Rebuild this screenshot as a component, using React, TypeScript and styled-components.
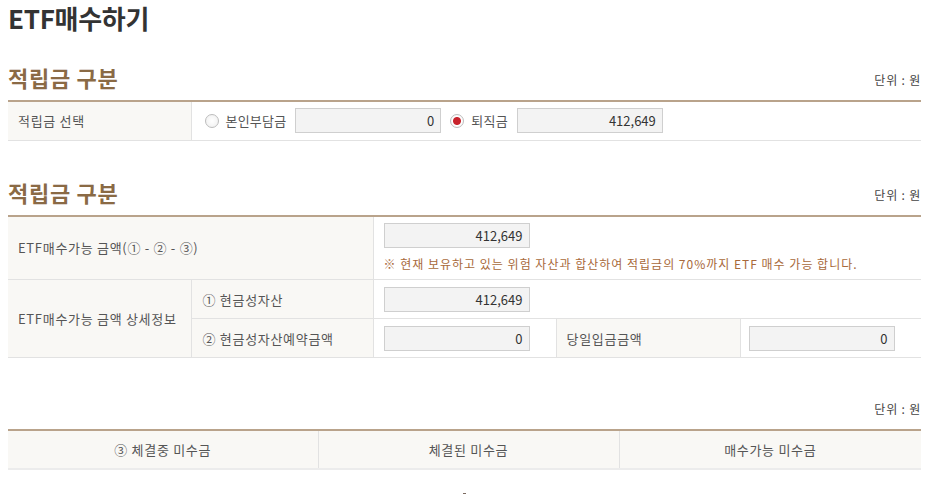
import styled, { createGlobalStyle } from 'styled-components'

const GlobalStyle = createGlobalStyle`
  html, body {
    margin: 0;
    padding: 0;
    background: #fff;
  }
  body {
    font-family: "Noto Sans CJK KR", "Noto Sans", sans-serif;
    color: #555;
    font-size: 13px;
  }
`

const Colors = {
  Brown: '#8a6a45',
  BrownLine: '#b9a38b',
  Line: '#e2e2e2',
  LabelBg: '#f9f8f5',
  InputBg: '#f3f3f3',
  InputLine: '#cfcfcf',
  Notice: '#a8693a',
}

const sections = [
  { title: '적립금 구분' },
  { title: '적립금 구분' },
]

function Amount({ value, width = 146 }: { value: string; width?: number }) {
  return <AmountBox $width={width}>{value}</AmountBox>
}

function Radio({ checked, label }: { checked?: boolean; label: string }) {
  return (
    <RadioLabel>
      <RadioCircle $checked={checked} />
      {label}
    </RadioLabel>
  )
}

function App() {
  return (
    <Page>
      <GlobalStyle />
      <PageTitle>ETF매수하기</PageTitle>

      <SectionHead $top={28}>
        <SectionTitle>{sections[0].title}</SectionTitle>
        <Unit>단위 : 원</Unit>
      </SectionHead>
      <Table>
        <colgroup>
          <col style={{ width: 183 }} />
          <col />
        </colgroup>
        <tbody>
          <Row $h={39}>
            <LabelCell $pad={10}>적립금 선택</LabelCell>
            <ValueCell $pad={13}>
              <RadioGroup>
                <Radio label="본인부담금" />
                <Amount value="0" />
                <Radio checked label="퇴직금" />
                <Amount value="412,649" />
              </RadioGroup>
            </ValueCell>
          </Row>
        </tbody>
      </Table>

      <SectionHead $top={36}>
        <SectionTitle>{sections[1].title}</SectionTitle>
        <Unit>단위 : 원</Unit>
      </SectionHead>
      <Table>
        <colgroup>
          <col style={{ width: 183 }} />
          <col style={{ width: 182 }} />
          <col style={{ width: 183 }} />
          <col style={{ width: 184 }} />
          <col />
        </colgroup>
        <tbody>
          <Row $h={64}>
            <LabelCell colSpan={2} $pad={10}>ETF매수가능 금액(① - ② - ③)</LabelCell>
            <ValueCell colSpan={3} $pad={10}>
              <Amount value="412,649" />
              <Notice>※ 현재 보유하고 있는 위험 자산과 합산하여 적립금의 70%까지 ETF 매수 가능 합니다.</Notice>
            </ValueCell>
          </Row>
          <Row $h={39}>
            <LabelCell rowSpan={2} $pad={10}>ETF매수가능 금액 상세정보</LabelCell>
            <LabelCell $pad={11}>① 현금성자산</LabelCell>
            <ValueCell colSpan={3} $pad={10}>
              <Amount value="412,649" />
            </ValueCell>
          </Row>
          <Row $h={39}>
            <LabelCell $pad={11}>② 현금성자산예약금액</LabelCell>
            <ValueCell $pad={10}>
              <Amount value="0" />
            </ValueCell>
            <LabelCell $pad={10}>당일입금금액</LabelCell>
            <ValueCell $pad={8}>
              <Amount value="0" />
            </ValueCell>
          </Row>
        </tbody>
      </Table>

      <SectionHead $top={33}>
        <span />
        <Unit>단위 : 원</Unit>
      </SectionHead>
      <Table>
        <colgroup>
          <col style={{ width: 310 }} />
          <col style={{ width: 301 }} />
          <col />
        </colgroup>
        <thead>
          <HeadRow>
            <HeadCell>③ 체결중 미수금</HeadCell>
            <HeadCell>체결된 미수금</HeadCell>
            <HeadCell>매수가능 미수금</HeadCell>
          </HeadRow>
        </thead>
        <tbody>
          <Row $h={39}>
            <EmptyCell colSpan={3}>
              <Loader />
            </EmptyCell>
          </Row>
        </tbody>
      </Table>
    </Page>
  )
}

export default App

const Page = styled.div`
  width: 913px;
  padding: 0 15px 0 8px;
`

const PageTitle = styled.h1`
  margin: 0;
  padding-top: 2px;
  font-size: 26px;
  line-height: 32px;
  font-weight: 700;
  color: #333;
  letter-spacing: -0.3px;
`

const SectionHead = styled.div<{ $top: number }>`
  display: flex;
  justify-content: space-between;
  align-items: flex-end;
  margin-top: ${p => p.$top}px;
  padding-bottom: 8px;
  height: 30px;
`

const SectionTitle = styled.h2`
  margin: 0;
  font-size: 22px;
  line-height: 30px;
  font-weight: 700;
  color: ${Colors.Brown};
  letter-spacing: 0.7px;
`

const Unit = styled.span`
  font-size: 12px;
  line-height: 18px;
  color: #444;
  padding-bottom: 3px;
  letter-spacing: 0.8px;
`

const Table = styled.table`
  width: 100%;
  table-layout: fixed;
  border-collapse: collapse;
  border-top: 2px solid ${Colors.BrownLine};
`

const Row = styled.tr<{ $h: number }>`
  height: ${p => p.$h}px;
  border-bottom: 1px solid ${Colors.Line};
`

const HeadRow = styled.tr`
  height: 39px;
  border-bottom: 2px solid #ececec;
`

const LabelCell = styled.td<{ $pad: number }>`
  background: ${Colors.LabelBg};
  border-right: 1px solid ${Colors.Line};
  padding: 0 0 0 ${p => p.$pad}px;
  vertical-align: middle;
  font-size: 13px;
  color: #555;
  white-space: nowrap;
  letter-spacing: 0.7px;
`

const ValueCell = styled.td<{ $pad: number }>`
  padding: 0 0 0 ${p => p.$pad}px;
  vertical-align: middle;
  border-right: 1px solid ${Colors.Line};
  &:last-child {
    border-right: none;
  }
`

const HeadCell = styled.th`
  background: ${Colors.LabelBg};
  border-right: 1px solid ${Colors.Line};
  font-weight: 400;
  font-size: 13px;
  color: #555;
  text-align: center;
  letter-spacing: 0.7px;
  &:last-child {
    border-right: none;
  }
`

const EmptyCell = styled.td`
  text-align: center;
  vertical-align: top;
  padding-top: 9px;
`

const Loader = styled.span`
  display: inline-block;
  width: 3px;
  height: 1px;
  background: #7b6a60;
`

const RadioGroup = styled.div`
  display: flex;
  align-items: center;
`

const RadioLabel = styled.label`
  display: inline-flex;
  align-items: center;
  gap: 7px;
  margin-right: 9px;
  font-size: 13px;
  color: #555;
  letter-spacing: 0.2px;
`

const RadioCircle = styled.span<{ $checked?: boolean }>`
  width: 14px;
  height: 14px;
  border-radius: 50%;
  border: 1px solid #bdbdbd;
  background: radial-gradient(circle, ${p => (p.$checked ? '#c8232c 0, #c8232c 3.5px, #fff 4.5px' : '#fff 0')}, #eeeeee 100%);
  box-sizing: border-box;
`

const AmountBox = styled.div<{ $width: number }>`
  box-sizing: border-box;
  width: ${p => p.$width}px;
  height: 25px;
  line-height: 23px;
  border: 1px solid ${Colors.InputLine};
  background: ${Colors.InputBg};
  text-align: right;
  padding-right: 6px;
  font-size: 13px;
  color: #333;
  margin-right: 9px;
`

const Notice = styled.p`
  margin: 7px 0 0;
  font-size: 12px;
  color: ${Colors.Notice};
  letter-spacing: 1px;
`
